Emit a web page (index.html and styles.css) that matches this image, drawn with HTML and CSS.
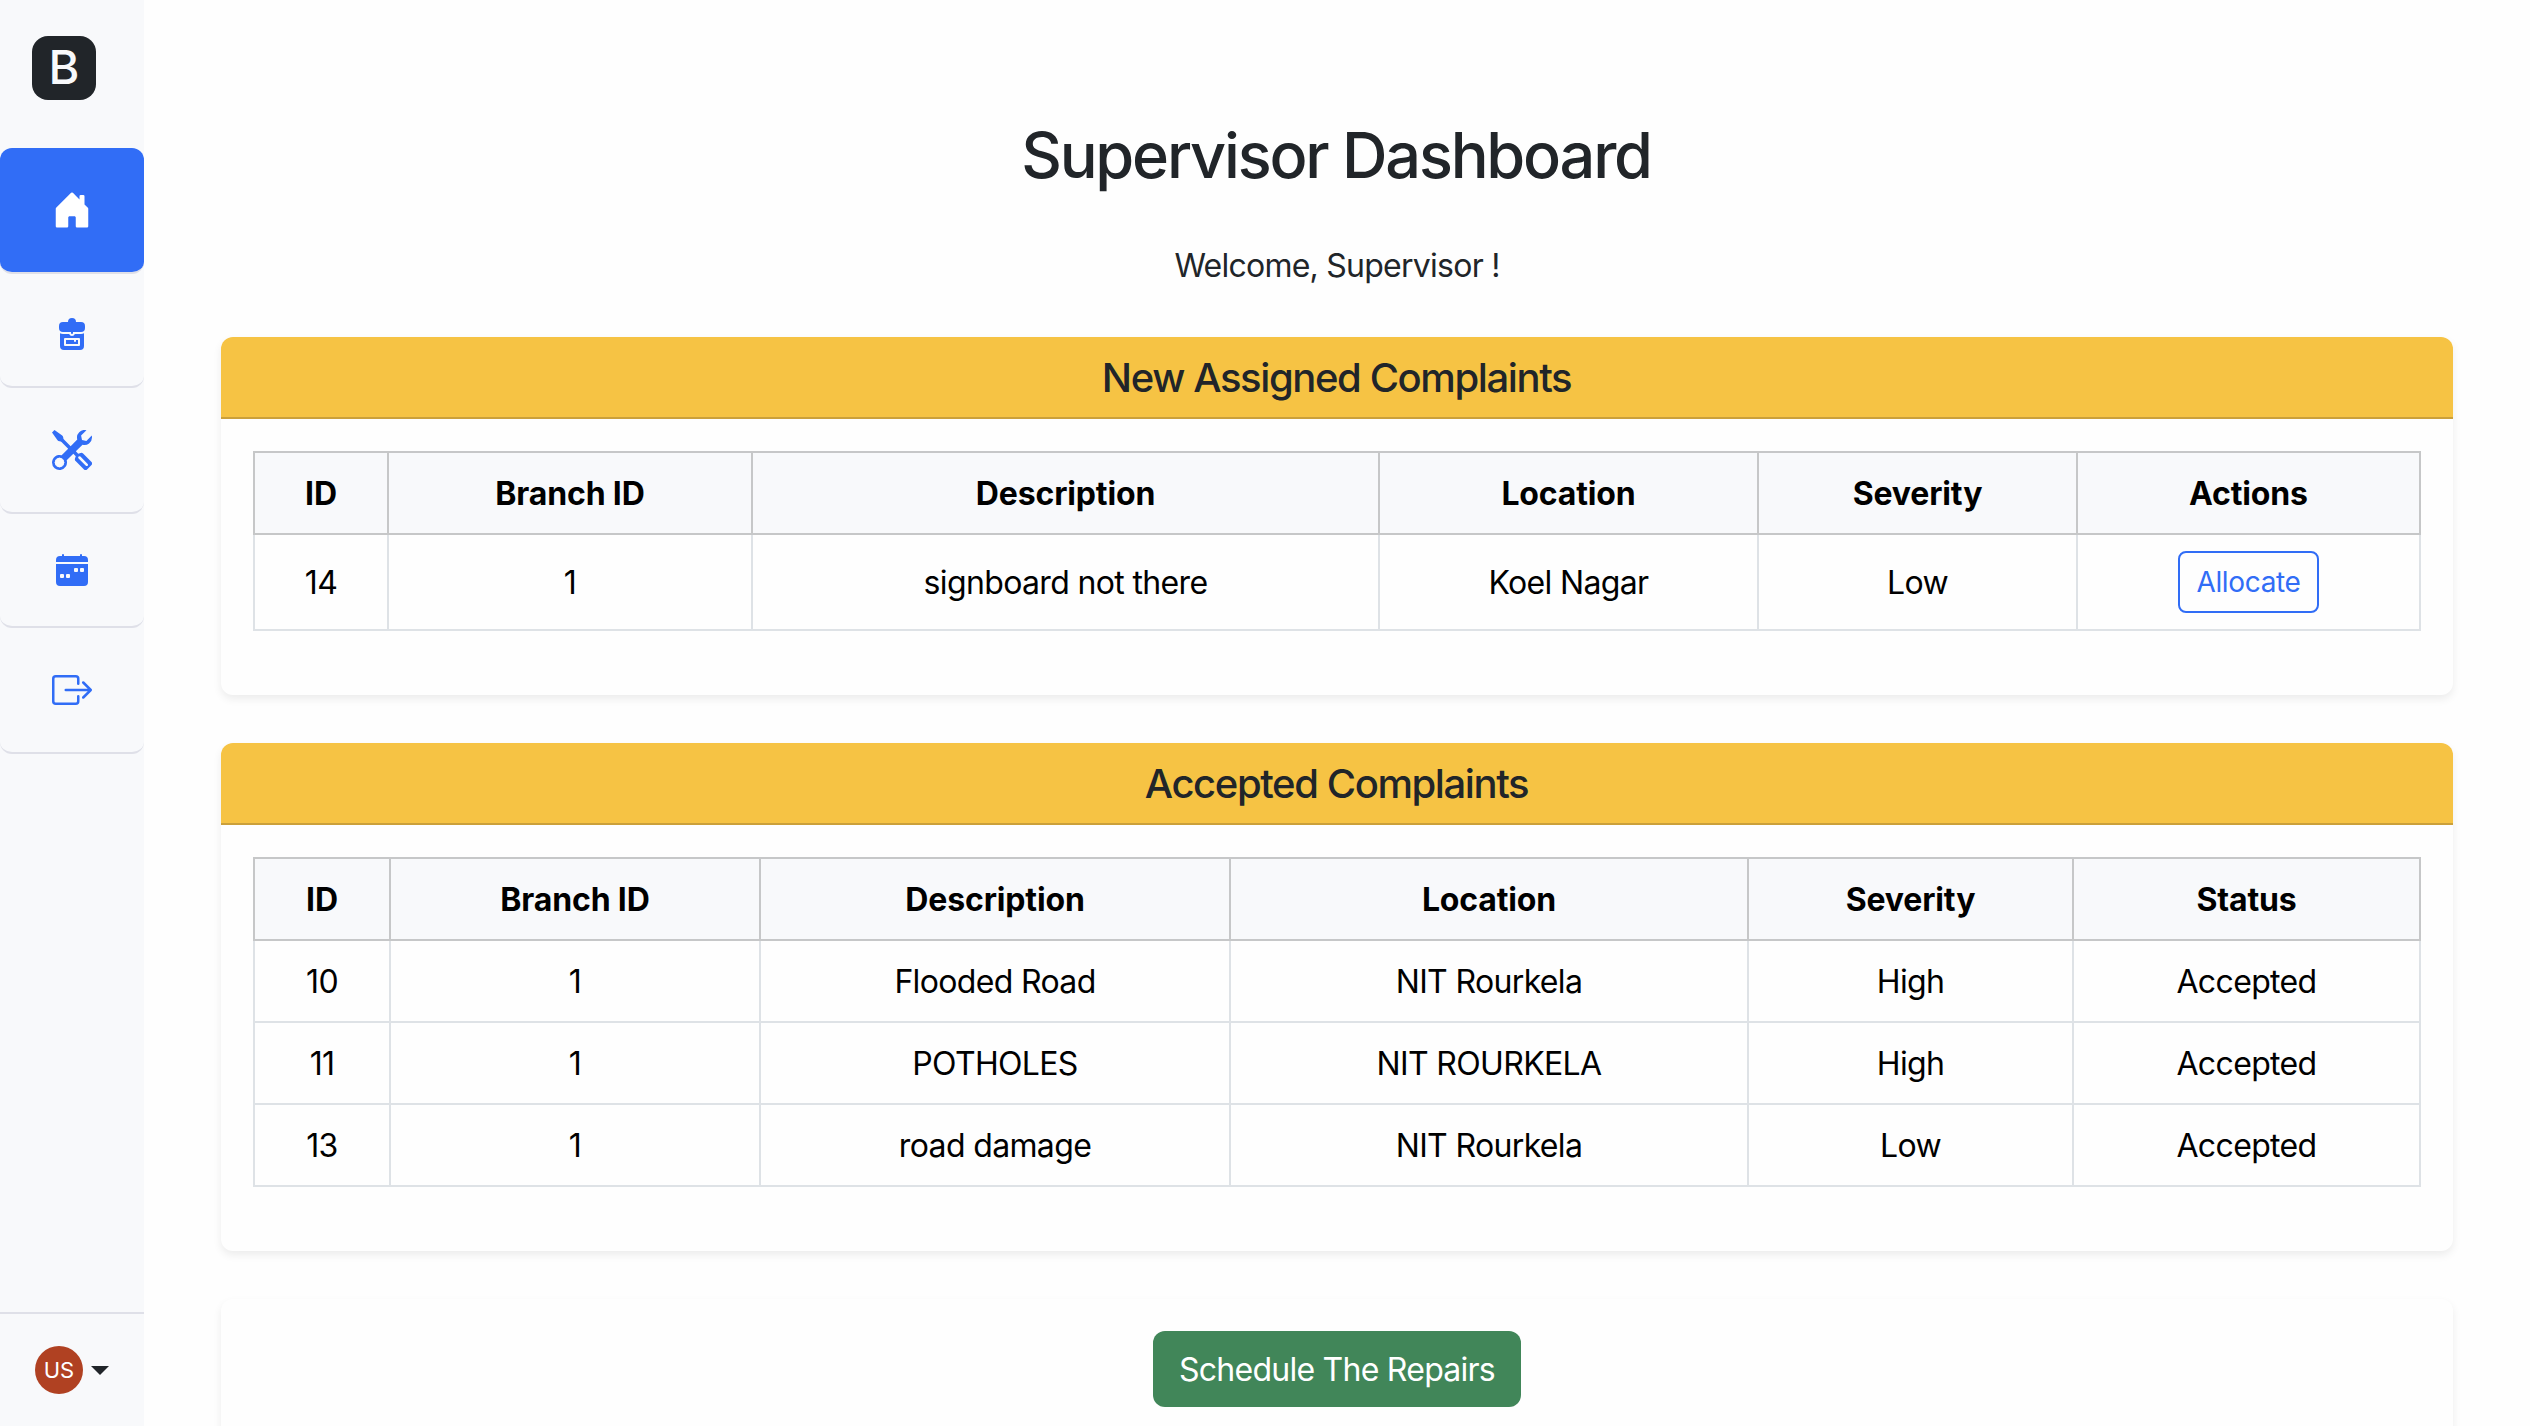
FILE: index.html
```html
<!DOCTYPE html>
<html lang="en">
<head>
<meta charset="utf-8">
<title>Supervisor Dashboard</title>
<link rel="stylesheet" href="styles.css">
</head>
<body>
<aside class="sidebar">
  <a class="logo">B</a>
  <nav class="nav">
    <a class="nav-item active"><svg class="icon" viewBox="0 0 16 16"><path d="M6.5 14.5v-3.505c0-.245.25-.495.5-.495h2c.25 0 .5.25.5.5v3.5a.5.5 0 0 0 .5.5h4a.5.5 0 0 0 .5-.5v-7a.5.5 0 0 0-.146-.354L13 5.793V2.5a.5.5 0 0 0-.5-.5h-1a.5.5 0 0 0-.5.5v1.293L8.354 1.146a.5.5 0 0 0-.708 0l-6 6A.5.5 0 0 0 1.5 7.5v7a.5.5 0 0 0 .5.5h4a.5.5 0 0 0 .5-.5"/></svg></a>
    <a class="nav-item nav-bag"><svg class="icon small" viewBox="0 0 16 16"><path d="M8 0a2 2 0 0 0-2 2H3.5a2 2 0 0 0-2 2v1a2 2 0 0 0 2 2h4v.5a.5.5 0 0 0 1 0V7h4a2 2 0 0 0 2-2V4a2 2 0 0 0-2-2H10a2 2 0 0 0-2-2"/><path fill-rule="evenodd" d="M14 7.6A3 3 0 0 1 12.500 8H9.415a1.500 1.500 0 0 1-2.830 0H3.500A3 3 0 0 1 2 7.600V14a2 2 0 0 0 2 2h8a2 2 0 0 0 2-2zM4.500 10h7a.5.5 0 0 1 .5.5v3a.5.5 0 0 1-.5.5h-7a.5.5 0 0 1-.5-.5v-3a.5.5 0 0 1 .5-.5M5 11v2h6v-2h-1v.5a.5.5 0 0 1-1 0V11z"/></svg></a>
    <a class="nav-item"><svg class="icon" viewBox="0 0 16 16"><path d="M1 0 0 1l2.200 3.081a1 1 0 0 0 .815.419h.07a1 1 0 0 1 .708.293l2.675 2.675-2.617 2.654A3.003 3.003 0 0 0 0 13a3 3 0 1 0 5.878-.851l2.654-2.617.968.968-.305.914a1 1 0 0 0 .242 1.023l3.270 3.270a.997.997 0 0 0 1.414 0l1.586-1.586a.997.997 0 0 0 0-1.414l-3.270-3.270a1 1 0 0 0-1.023-.242L10.500 9.500l-.96-.96 2.680-2.643A3.005 3.005 0 0 0 16 3q0-.405-.102-.777l-2.140 2.141L12 4l-.364-1.757L13.777.102a3 3 0 0 0-3.675 3.680L7.462 6.460 4.793 3.793a1 1 0 0 1-.293-.707v-.071a1 1 0 0 0-.419-.814zm9.646 10.646a.5.5 0 0 1 .708 0l2.914 2.915a.5.5 0 0 1-.707.707l-2.915-2.914a.5.5 0 0 1 0-.708M3 11l.471.242.529.026.287.445.445.287.026.529L5 13l-.242.471-.026.529-.445.287-.287.445-.529.026L3 15l-.471-.242L2 14.732l-.287-.445L1.268 14l-.026-.529L1 13l.242-.471.026-.529.445-.287.287-.445.529-.026z"/></svg></a>
    <a class="nav-item nav-calendar"><svg class="icon small" viewBox="0 0 16 16"><path d="M4 .5a.5.5 0 0 0-1 0V1H2a2 2 0 0 0-2 2v1h16V3a2 2 0 0 0-2-2h-1V.5a.5.5 0 0 0-1 0V1H4z"/><path fill-rule="evenodd" d="M16 14V5H0v9a2 2 0 0 0 2 2h12a2 2 0 0 0 2-2M9.500 7h1a.5.5 0 0 1 .5.5v1a.5.5 0 0 1-.5.5h-1a.5.5 0 0 1-.5-.5v-1a.5.5 0 0 1 .5-.5m3 0h1a.5.5 0 0 1 .5.5v1a.5.5 0 0 1-.5.5h-1a.5.5 0 0 1-.5-.5v-1a.5.5 0 0 1 .5-.5M2.500 10h1a.5.5 0 0 1 .5.5v1a.5.5 0 0 1-.5.5h-1a.5.5 0 0 1-.5-.5v-1a.5.5 0 0 1 .5-.5m3 0h1a.5.5 0 0 1 .5.5v1a.5.5 0 0 1-.5.5h-1a.5.5 0 0 1-.5-.5v-1a.5.5 0 0 1 .5-.5"/></svg></a>
    <a class="nav-item"><svg class="icon" viewBox="0 0 16 16"><path d="M10 12.500a.5.5 0 0 1-.5.5h-8a.5.5 0 0 1-.5-.5v-9a.5.5 0 0 1 .5-.5h8a.5.5 0 0 1 .5.5v2a.5.5 0 0 0 1 0v-2A1.500 1.500 0 0 0 9.500 2h-8A1.500 1.500 0 0 0 0 3.500v9A1.500 1.500 0 0 0 1.500 14h8a1.500 1.500 0 0 0 1.500-1.500v-2a.5.5 0 0 0-1 0z"/><path d="M15.854 8.354a.5.5 0 0 0 0-.708l-3-3a.5.5 0 0 0-.708.708L14.293 7.500H5.500a.5.5 0 0 0 0 1h8.793l-2.147 2.146a.5.5 0 0 0 .708.708z"/></svg></a>
  </nav>
  <div class="account"><span class="avatar">US</span><span class="caret"></span></div>
</aside>
<main class="main">
  <h1 class="title">Supervisor Dashboard</h1>
  <p class="welcome">Welcome, Supervisor !</p>
  <section class="card">
    <h2 class="card-header">New Assigned Complaints</h2>
    <div class="card-body">
      <table class="table">
        <colgroup><col class="a1"><col class="a2"><col class="a3"><col class="a4"><col class="a5"><col class="a6"></colgroup>
        <thead><tr><th>ID</th><th>Branch ID</th><th>Description</th><th>Location</th><th>Severity</th><th>Actions</th></tr></thead>
        <tbody><tr class="tall"><td>14</td><td>1</td><td>signboard not there</td><td>Koel Nagar</td><td>Low</td><td class="action"><button class="allocate">Allocate</button></td></tr></tbody>
      </table>
    </div>
  </section>
  <section class="card">
    <h2 class="card-header">Accepted Complaints</h2>
    <div class="card-body">
      <table class="table">
        <colgroup><col class="b1"><col class="b2"><col class="b3"><col class="b4"><col class="b5"><col class="b6"></colgroup>
        <thead><tr><th>ID</th><th>Branch ID</th><th>Description</th><th>Location</th><th>Severity</th><th>Status</th></tr></thead>
        <tbody>
          <tr><td>10</td><td>1</td><td>Flooded Road</td><td>NIT Rourkela</td><td>High</td><td>Accepted</td></tr>
          <tr><td>11</td><td>1</td><td>POTHOLES</td><td>NIT ROURKELA</td><td>High</td><td>Accepted</td></tr>
          <tr><td>13</td><td>1</td><td>road damage</td><td>NIT Rourkela</td><td>Low</td><td>Accepted</td></tr>
        </tbody>
      </table>
    </div>
  </section>
  <section class="card schedule"><button class="schedule-button">Schedule The Repairs</button></section>
</main>
</body>
</html>
```
FILE: styles.css
```css
* { box-sizing: border-box; }
body {
  margin: 0;
  height: 1426px;
  display: flex;
  background: #fefefe;
  color: #212529;
  font: 400 32px/48px Inter, "Liberation Sans", sans-serif;
}
.sidebar {
  width: 144px;
  flex: none;
  display: flex;
  flex-direction: column;
  background: #f8f9fb;
}
.logo {
  width: 64px;
  height: 64px;
  margin: 36px 0 48px 32px;
  border-radius: 16px;
  background: #212529;
  color: #f8f9fb;
  font-size: 47px;
  font-weight: 500;
  line-height: 61px;
  text-align: center;
}
.nav { display: flex; flex-direction: column; }
.nav-item {
  height: 126px;
  padding-top: 42px;
  display: flex;
  justify-content: center;
  align-items: flex-start;
  border-bottom: 2px solid #dfe0e8;
  border-radius: 12px;
  color: #316df6;
}
.nav-item.active { background: #316df6; color: #fff; }
.nav-bag { height: 114px; padding-top: 44px; }
.nav-calendar { height: 114px; padding-top: 40px; }
.icon { width: 40px; height: 40px; fill: currentColor; display: block; }
.icon.small { width: 32px; height: 32px; }
.account {
  height: 114px;
  margin-top: auto;
  padding: 32px 0 0 35px;
  display: flex;
  gap: 8px;
  border-top: 2px solid #dfe0e8;
}
.avatar {
  width: 48px;
  height: 48px;
  border-radius: 50%;
  background: #b04122;
  color: #fff;
  font-size: 22px;
  text-align: center;
}
.caret {
  height: 9px;
  margin-top: 20px;
  border: 9px solid transparent;
  border-top-color: #212529;
  border-bottom: 0;
}
.main {
  flex: 1;
  height: 1426px;
  padding: 116px 77px 0;
  display: flex;
  flex-direction: column;
  overflow: hidden;
}
.title {
  margin: 0;
  padding-right: 2px;
  font-size: 63px;
  line-height: 78px;
  font-weight: 500;
  letter-spacing: -2.2px;
  text-align: center;
}
.welcome { margin: 48px 0 47px; letter-spacing: -.75px; text-align: center; }
.card {
  flex: none;
  margin-bottom: 48px;
  border-radius: 12px;
  box-shadow: 0 4px 8px rgba(0, 0, 0, .075);
}
.card-header {
  height: 82px;
  margin: 0;
  padding-right: 1px;
  border-bottom: 2px solid #cba03a;
  border-radius: 12px 12px 0 0;
  background: #f6c344;
  font-size: 40px;
  font-weight: 500;
  line-height: 82px;
  letter-spacing: -1.4px;
  text-align: center;
}
.card-body { padding: 32px 32px 64px; }
.table {
  width: 2168px;
  table-layout: fixed;
  border-collapse: separate;
  border-spacing: 0;
  border-left: 2px solid #dee2e6;
  color: #000;
  text-align: center;
}
.table th, .table td {
  height: 82px;
  padding: 2px 0 0;
  border-right: 2px solid #dee2e6;
  border-bottom: 2px solid #dee2e6;
  letter-spacing: -.65px;
}
.table th {
  height: 84px;
  border-top: 2px solid #c6c7c8;
  border-right-color: #c6c7c8;
  border-bottom-color: #c6c7c8;
  background: #f8f9fb;
  font-weight: 700;
  letter-spacing: -.15px;
}
.table th:first-child { box-shadow: -2px 0 #c6c7c8; }
.table .tall td { height: 96px; }
.table .tall .action { padding: 0; }
.a1 { width: 134px; } .a2 { width: 364px; } .a3 { width: 627px; }
.a4 { width: 379px; } .a5 { width: 319px; } .a6 { width: 343px; }
.b1 { width: 136px; } .b2 { width: 370px; } .b3 { width: 470px; }
.b4 { width: 518px; } .b5 { width: 325px; } .b6 { width: 347px; }
button { display: block; margin: 0 auto; padding: 0; font: inherit; }
.allocate {
  width: 141px;
  height: 62px;
  border: 2px solid #316df6;
  border-radius: 8px;
  background: transparent;
  color: #316df6;
  font-size: 28px;
  letter-spacing: -.35px;
}
.schedule { padding-top: 32px; height: 200px; }
.schedule-button {
  width: 368px;
  height: 76px;
  padding-top: 2px;
  border: 0;
  border-radius: 12px;
  background: #418659;
  color: #fff;
  letter-spacing: -.75px;
}
```
